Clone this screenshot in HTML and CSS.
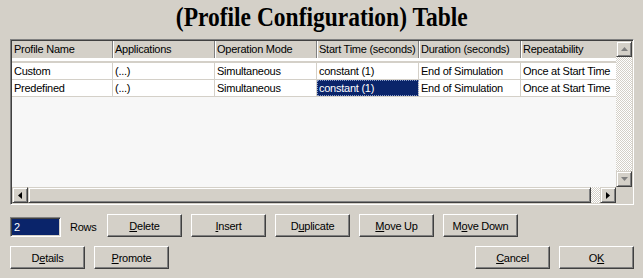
FILE: index.html
```html
<!DOCTYPE html>
<html lang="en">
<head>
    <meta charset="UTF-8">
    <title>(Profile Configuration) Table</title>
    <link rel="stylesheet" href="styles.css">
</head>
<body>
    <h1 class="title"><span>(Profile Configuration) Table</span></h1>

    <div class="frame">
        <div class="viewport">
            <div class="row head">
                <div class="cell">Profile Name</div>
                <div class="cell">Applications</div>
                <div class="cell">Operation Mode</div>
                <div class="cell">Start Time (seconds)</div>
                <div class="cell">Duration (seconds)</div>
                <div class="cell">Repeatability</div>
            </div>
            <div class="spacer"></div>
            <div class="row">
                <div class="cell">Custom</div>
                <div class="cell">(...)</div>
                <div class="cell">Simultaneous</div>
                <div class="cell">constant (1)</div>
                <div class="cell">End of Simulation</div>
                <div class="cell">Once at Start Time</div>
            </div>
            <div class="row">
                <div class="cell">Predefined</div>
                <div class="cell">(...)</div>
                <div class="cell">Simultaneous</div>
                <div class="cell selected">constant (1)</div>
                <div class="cell">End of Simulation</div>
                <div class="cell">Once at Start Time</div>
            </div>
        </div>

        <div class="vscroll">
            <div class="sbtn">
                <svg width="7" height="4" viewBox="0 0 7 4"><polygon points="3.5,0 7,4 0,4" fill="#808080"/></svg>
            </div>
            <div class="track"></div>
            <div class="sbtn">
                <svg width="7" height="4" viewBox="0 0 7 4"><polygon points="0,0 7,0 3.5,4" fill="#808080"/></svg>
            </div>
        </div>

        <div class="hscroll">
            <div class="sbtn">
                <svg width="4" height="7" viewBox="0 0 4 7"><polygon points="4,0 4,7 0,3.5" fill="#000"/></svg>
            </div>
            <div class="thumb"></div>
            <div class="track"></div>
            <div class="sbtn">
                <svg width="4" height="7" viewBox="0 0 4 7"><polygon points="0,0 4,3.5 0,7" fill="#000"/></svg>
            </div>
        </div>

        <div class="corner"></div>
    </div>

    <div class="controls">
        <div class="line">
            <input class="rows-input" type="text" value="2">
            <span class="rows-label">Rows</span>
            <button><u>D</u>elete</button>
            <button><u>I</u>nsert</button>
            <button>D<u>u</u>plicate</button>
            <button><u>M</u>ove Up</button>
            <button>M<u>o</u>ve Down</button>
        </div>
        <div class="line">
            <button>D<u>e</u>tails</button>
            <button><u>P</u>romote</button>
            <div class="fill"></div>
            <button><u>C</u>ancel</button>
            <button>O<u>K</u></button>
        </div>
    </div>
</body>
</html>
```

FILE: styles.css
```css
body {
    margin: 0;
    background-color: #d4d0c8;
    font-family: "Liberation Sans", Arial, sans-serif;
    font-size: 11px;
    letter-spacing: -0.25px;
    color: #000;
}
.title {
    margin: 0 0 5px 0;
    height: 34px;
    line-height: 34px;
    text-align: center;
    font-family: "Liberation Serif", "Times New Roman", serif;
    font-size: 27px;
    font-weight: bold;
    letter-spacing: 0;
}
.title span {
    display: inline-block;
    transform: scaleX(0.87);
}
.frame {
    margin-left: 10px;
    width: 620px;
    display: grid;
    grid-template-columns: 604px 16px;
    grid-template-rows: 146px 16px;
    border: 1px solid;
    border-color: #808080 #fff #fff #808080;
    box-shadow: inset 1px 1px #404040, inset -1px -1px #d4d0c8;
    padding: 1px;
}
.viewport {
    background-color: #f7f7f7;
    overflow: hidden;
}
.row {
    display: grid;
    grid-template-columns: 101px 102px 102px 102px 102px 110px;
    height: 16px;
    background-color: #fff;
    border-bottom: 1px solid #d4d0c8;
}
.cell {
    padding-left: 2px;
    line-height: 16px;
    white-space: nowrap;
    overflow: hidden;
    border-right: 1px solid #d4d0c8;
}
.row.head {
    height: 17px;
    background-color: #d4d0c8;
    border-bottom: none;
}
.head .cell {
    line-height: 17px;
    border-right: 1px solid #808080;
    box-shadow: inset 1px 0 #fff;
}
.head .cell:first-child {
    box-shadow: none;
}
.spacer {
    height: 3px;
    background-color: #fff;
    border-bottom: 2px solid #d4d0c8;
}
.cell.selected {
    background-color: #0a246a;
    color: #fff;
    outline: 1px dotted #8a9cc8;
    outline-offset: -1px;
}
.vscroll {
    display: flex;
    flex-direction: column;
}
.hscroll {
    display: flex;
}
.track {
    flex: 1;
    background: repeating-conic-gradient(#d4d0c8 0 25%, #fff 0 50%) 0 0 / 2px 2px;
}
.sbtn,
.thumb {
    box-sizing: border-box;
    background-color: #d4d0c8;
    border: 1px solid;
    border-color: #d4d0c8 #404040 #404040 #d4d0c8;
    box-shadow: inset 1px 1px #fff, inset -1px -1px #808080;
}
.sbtn {
    width: 16px;
    height: 16px;
    display: flex;
    align-items: center;
    justify-content: center;
}
.thumb {
    width: 563px;
}
.corner {
    background-color: #d4d0c8;
}
.controls {
    padding: 9px 9px 0 10px;
    display: flex;
    flex-direction: column;
    gap: 9px;
}
.line {
    display: flex;
    align-items: center;
    gap: 9px;
}
.fill {
    flex: 1;
}
.rows-input {
    box-sizing: border-box;
    width: 51px;
    height: 20px;
    margin-top: 3px;
    padding: 0 3px;
    background-color: #0a246a;
    color: #fff;
    font-family: inherit;
    font-size: 11px;
    border: 1px solid;
    border-color: #808080 #fff #fff #808080;
    box-shadow: inset 1px 1px #404040, inset -1px -1px #d4d0c8;
    outline: none;
}
.rows-label {
    width: 28px;
    margin-top: 3px;
}
button {
    box-sizing: border-box;
    width: 75px;
    height: 23px;
    padding: 0;
    background-color: #d4d0c8;
    font-family: inherit;
    font-size: 11px;
    letter-spacing: -0.25px;
    color: #000;
    border: 1px solid;
    border-color: #fff #404040 #404040 #fff;
    box-shadow: inset -1px -1px #808080;
}
```
